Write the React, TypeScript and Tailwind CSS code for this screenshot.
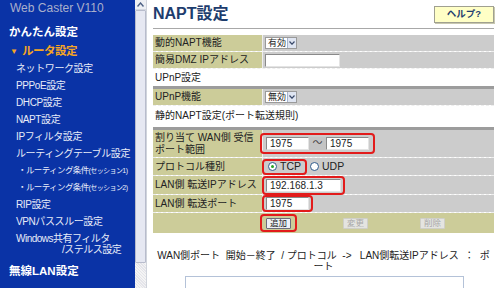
import React from 'react';

const FONT = "font-['Liberation_Sans','Noto_Sans_CJK_JP',sans-serif]";

const navItems = [
  'ネットワーク設定',
  'PPPoE設定',
  'DHCP設定',
  'NAPT設定',
  'IPフィルタ設定',
  'ルーティングテーブル設定',
];

const Sidebar: React.FC = () => (
  <div className="w-[135px] h-[288px] shrink-0 overflow-hidden bg-[#0a33a6] text-[#e8ecf8] whitespace-nowrap">
    <div className="pl-[10px] h-[16px] leading-[16px] text-[12px] text-[#a9afcc]">Web Caster V110</div>
    <div className="mt-[8px] pl-[9px] h-[17px] leading-[17px] text-[11.5px] font-bold text-white">かんたん設定</div>
    <div className="mt-[2px] pl-[10px] h-[17px] leading-[17px] text-[11.5px] font-bold text-[#f5a623] flex items-center gap-[4px]">
      <span className="text-[8px]">▼</span>
      <span className="tracking-[-0.5px]">ルータ設定</span>
    </div>
    {navItems.map((item) => (
      <div key={item} className="pl-[16px] h-[17px] leading-[17px] text-[10px] tracking-[-0.4px]">
        {item}
      </div>
    ))}
    {['1', '2'].map((n) => (
      <div key={n} className="pl-[18px] h-[17px] leading-[17px] text-[8.5px] tracking-[-0.6px]">
        ・ルーティング条件<span className="text-[7px]">(セッション{n})</span>
      </div>
    ))}
    <div className="pl-[16px] h-[17px] leading-[17px] text-[10px] tracking-[-0.4px]">RIP設定</div>
    <div className="pl-[16px] h-[17px] leading-[17px] text-[10px] tracking-[-0.4px]">VPNパススルー設定</div>
    <div className="pl-[16px] pt-[3px] text-[10px] leading-[11px] tracking-[-0.5px]">
      <div>Windows共有フィルタ</div>
      <div className="pl-[46px]">/ステルス設定</div>
    </div>
    <div className="mt-[8px] pl-[9px] h-[17px] leading-[17px] text-[11.5px] font-bold text-white">無線LAN設定</div>
  </div>
);

const Scrollbar: React.FC = () => (
  <div className="w-[12px] h-[288px] shrink-0 bg-[#eef0f4] border-r border-[#d0d4dc] flex flex-col">
    <div className="h-[10px] shrink-0 flex items-center justify-center border-b border-[#d4d8e0]">
      <svg width="7" height="5" viewBox="0 0 7 5">
        <path d="M0.5 4.5 L3.5 1 L6.5 4.5" fill="none" stroke="#4d6185" strokeWidth="1.4" />
      </svg>
    </div>
    <div className="h-[253px] shrink-0 bg-[#e6e8f2] border border-[#b8bccc] rounded-[1px]" />
    <div className="flex-1 bg-[repeating-linear-gradient(45deg,#f4f4f4_0px,#f4f4f4_1px,#e4e4ea_1px,#e4e4ea_2px)]" />
  </div>
);

const Input: React.FC<{ w: number; value?: string }> = ({ w, value }) => (
  <div
    className="h-[13px] shrink-0 bg-white border border-t-[#8a8a8a] border-l-[#8a8a8a] border-b-[#e4e4e4] border-r-[#e4e4e4] pl-[3px] text-[10px] leading-[11px] text-[#222]"
    style={{ width: w }}
  >
    {value}
  </div>
);

const Select: React.FC<{ value: string }> = ({ value }) => (
  <div className="h-[12px] w-[32px] bg-white border border-[#9a9a9a] flex items-stretch">
    <span className="flex-1 pl-[2px] text-[9px] leading-[10px] text-[#222]">{value}</span>
    <span className="w-[9px] shrink-0 bg-[#dfe5f2] border-l border-[#a8b4cc] flex items-center justify-center">
      <svg width="6" height="4" viewBox="0 0 6 4">
        <path d="M0.5 0.5 L3 3.2 L5.5 0.5" fill="none" stroke="#3a4a6a" strokeWidth="1.2" />
      </svg>
    </span>
  </div>
);

const Outline: React.FC<{ children: React.ReactNode; className?: string }> = ({ children, className }) => (
  <div className={`border-2 border-[#e21b1b] rounded-[4px] flex items-center ${className ?? ''}`}>{children}</div>
);

const Row: React.FC<{ label: React.ReactNode; h: number; children?: React.ReactNode }> = ({ label, h, children }) => (
  <div className="flex border-b border-dashed border-[#eeeeee]" style={{ height: h }}>
    <div className="w-[109px] shrink-0 bg-[#cccc99] pl-[2px] text-[10px] leading-[12px] text-[#222] flex items-center">
      {label}
    </div>
    <div className="flex-1 bg-[#cccccc] border-l border-[#eeeeee] pl-[2px] flex items-center">{children}</div>
  </div>
);

const Radio: React.FC<{ checked?: boolean }> = ({ checked }) => (
  <span className="w-[9px] h-[9px] rounded-full border border-[#2f5a8c] bg-white flex items-center justify-center">
    {checked && <span className="w-[3px] h-[3px] rounded-full bg-[#25a525]" />}
  </span>
);

const SmallButton: React.FC<{ label: string; disabled?: boolean }> = ({ label, disabled }) => (
  <div
    className={`h-[11px] px-[3px] text-[8.5px] leading-[9px] rounded-[1px] border ${
      disabled ? 'bg-[#e4e4e0] border-[#cfcfc8] text-[#a8a8a8]' : 'bg-[#eef0f6] border-[#6c6c7c] text-[#222]'
    }`}
  >
    {label}
  </div>
);

export default function App() {
  return (
    <div className={`w-[500px] h-[288px] overflow-hidden bg-white flex ${FONT}`}>
      <Sidebar />
      <Scrollbar />
      <main className="flex-1 min-w-0 pl-[6px] pr-[6px] whitespace-nowrap">
        <div className="h-[29px] flex justify-between items-start border-b border-[#a8a8a8]">
          <h1 className="mt-[4px] text-[16px] leading-[20px] font-bold text-[#1e3d6e]">NAPT設定</h1>
          <div className="mt-[6px] w-[60px] h-[17px] bg-[#ffffc6] border border-[#a0a090] shadow-[1px_1px_0_#c8c8b0] flex items-center justify-center text-[9.5px] font-bold text-[#1e3d6e]">
            ヘルプ?
          </div>
        </div>

        <div className="mt-[6px]">
          <Row label="動的NAPT機能" h={17}>
            <Select value="有効" />
          </Row>
          <Row label="簡易DMZ IPアドレス" h={17}>
            <Input w={75} />
          </Row>
        </div>
        <div className="h-[17px] leading-[17px] pl-[2px] text-[10px] text-[#222]">UPnP設定</div>
        <div className="h-[3px] bg-[#9c9c9c]" />
        <Row label="UPnP機能" h={17}>
          <Select value="無効" />
        </Row>
        <div className="h-[21px] leading-[20px] pl-[2px] text-[10px] text-[#222]">静的NAPT設定(ポート転送規則)</div>
        <div className="h-[3px] bg-[#9c9c9c]" />
        <Row
          label={
            <span className="leading-[12px]">
              割り当て WAN側 受信
              <br />
              ポート範囲
            </span>
          }
          h={28}
        >
          <Outline className="px-[4px] py-[2px] -ml-[5px]">
            <Input w={43} value="1975" />
            <span className="w-[17px] h-[13px] bg-[#c4c4c4] text-[10px] leading-[12px] text-center text-[#444]">～</span>
            <Input w={43} value="1975" />
          </Outline>
        </Row>
        <Row label="プロトコル種別" h={18}>
          <Outline className="h-[16px] px-[4px] gap-[3px] -ml-[3px]">
            <Radio checked />
            <span className="text-[10.5px] leading-[11px] text-[#222]">TCP</span>
          </Outline>
          <span className="ml-[3px] flex items-center gap-[3px]">
            <Radio />
            <span className="text-[10.5px] leading-[11px] text-[#222]">UDP</span>
          </span>
        </Row>
        <Row label="LAN側 転送IPアドレス" h={19}>
          <Outline className="h-[19px] px-[2px] -ml-[3px]">
            <Input w={75} value="192.168.1.3" />
          </Outline>
        </Row>
        <Row label="LAN側 転送ポート" h={18}>
          <Outline className="h-[17px] px-[2px] -ml-[3px]">
            <Input w={43} value="1975" />
          </Outline>
        </Row>
        <div className="h-[20px] bg-[#cccc99] flex items-center">
          <Outline className="ml-[107px] h-[18px] px-[4px]">
            <SmallButton label="追加" />
          </Outline>
          <div className="ml-[46px]">
            <SmallButton label="変更" disabled />
          </div>
          <div className="ml-[52px]">
            <SmallButton label="削除" disabled />
          </div>
        </div>

        <div className="mt-[17px] text-center text-[10px] leading-[11px] text-[#222] whitespace-pre">
          {'WAN側ポート  開始－終了  / プロトコル  ->   LAN側転送IPアドレス  ：  ポ'}
          <br />
          ート
        </div>
        <div className="mt-[4px] ml-[32px] w-[279px] h-[40px] border border-[#b4c2d8] bg-white" />
      </main>
    </div>
  );
}
